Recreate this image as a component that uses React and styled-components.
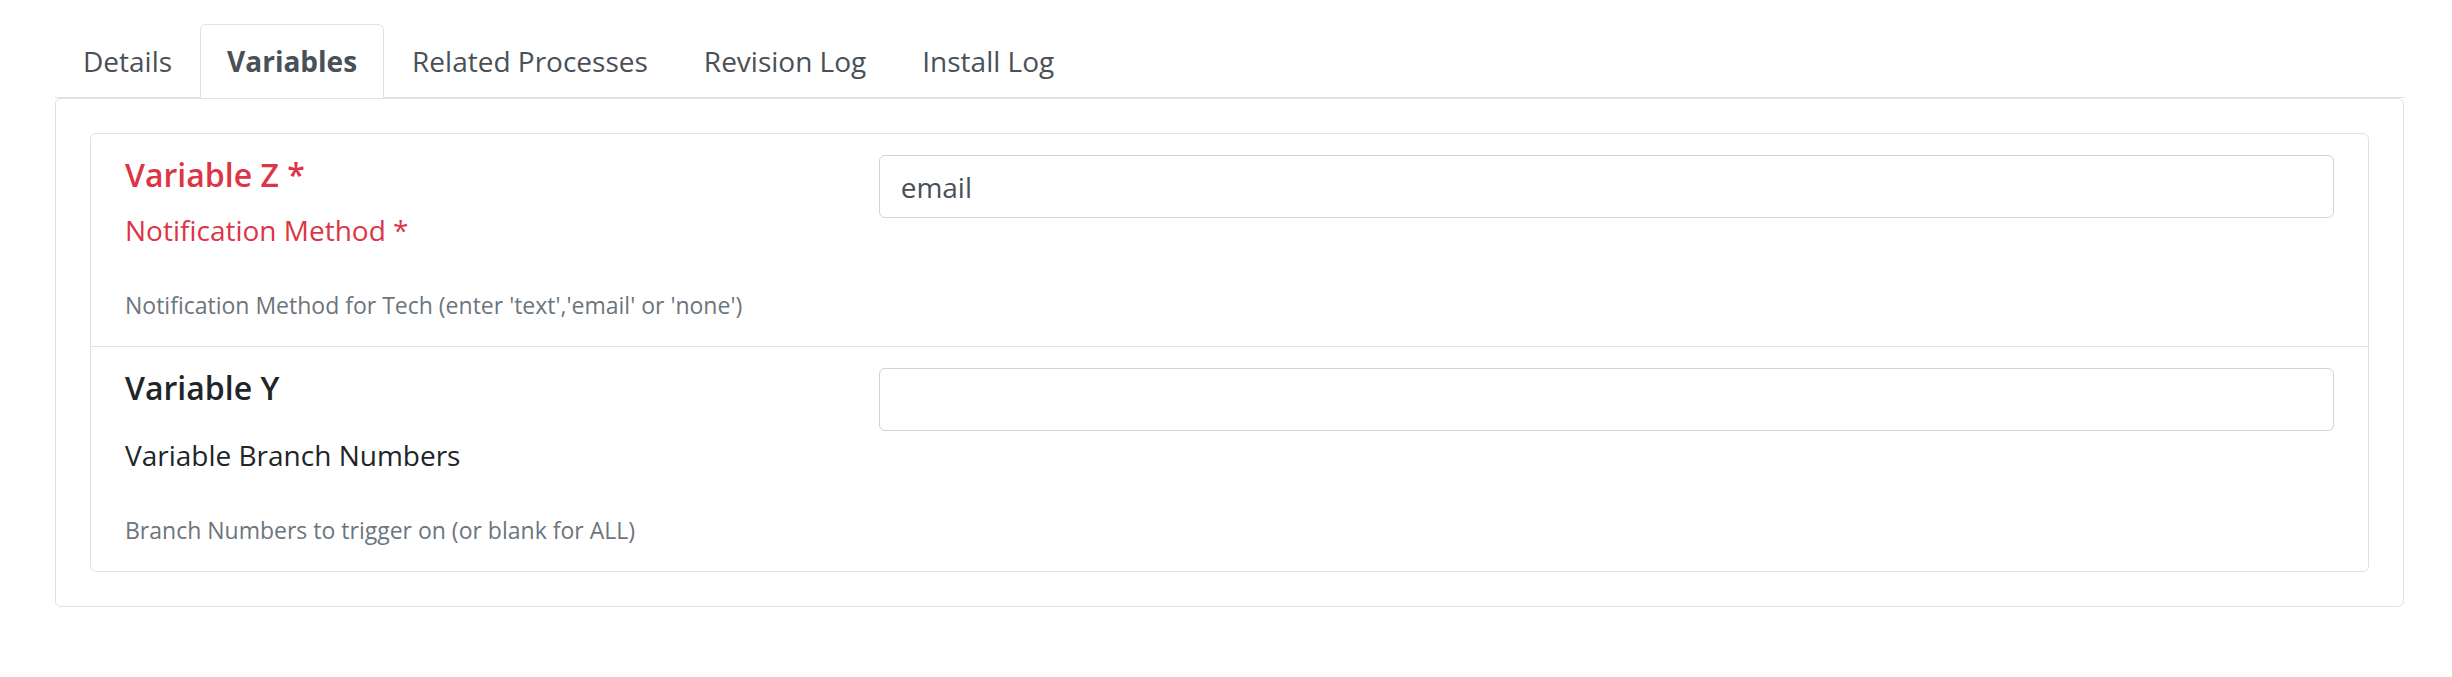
import React from "react";
import styled, { createGlobalStyle } from "styled-components";

const Global = createGlobalStyle`
  html, body { margin: 0; padding: 0; background: #ffffff; }
  body { font-family: "Open Sans", "Noto Sans", "Liberation Sans", sans-serif; color: #212529; }
  * { box-sizing: border-box; }
`;

const Page = styled.div`
  padding: 24px 48px 0 55px;
`;

const TabBar = styled.ul`
  display: flex;
  list-style: none;
  margin: 0;
  padding: 0;
  border-bottom: 1px solid #dee2e6;
`;

const Tab = styled.li`
  margin-bottom: -1px;
  padding: 14px ${(p) => (p.$active ? 26 : 27)}px;
  font-size: 28px;
  line-height: 44px;
  color: #495057;
  font-weight: ${(p) => (p.$active ? 700 : 400)};
  border: 1px solid transparent;
  border-color: ${(p) => (p.$active ? "#dee2e6 #dee2e6 #ffffff" : "transparent")};
  border-top-left-radius: 6px;
  border-top-right-radius: 6px;
  background: ${(p) => (p.$active ? "#ffffff" : "transparent")};
  cursor: pointer;
`;

const Panel = styled.div`
  border: 1px solid #dee2e6;
  border-radius: 6px;
  padding: 34px;
`;

const List = styled.div`
  border: 1px solid #dee2e6;
  border-radius: 6px;
`;

const Item = styled.div`
  display: grid;
  grid-template-columns: 1fr 2fr;
  column-gap: 26px;
  align-items: start;
  padding: 21px 34px 22px;
  & + & { border-top: 1px solid #dee2e6; }
`;

const LabelCol = styled.div`
  display: flex;
  flex-direction: column;
`;

const Title = styled.div`
  font-size: 32px;
  line-height: 40px;
  font-weight: 600;
  color: ${(p) => (p.$required ? "#dc3545" : "#212529")};
`;

const SubLabel = styled.div`
  margin-top: ${(p) => p.$gap}px;
  font-size: 28px;
  line-height: 44px;
  color: ${(p) => (p.$required ? "#dc3545" : "#212529")};
`;

const Help = styled.div`
  margin-top: 34px;
  font-size: 23px;
  line-height: 38px;
  color: #6c757d;
`;

const Input = styled.input`
  display: block;
  width: 100%;
  height: 63px;
  padding: 0 21px;
  font-family: inherit;
  font-size: 28px;
  color: #495057;
  background: #ffffff;
  border: 1px solid #ced4da;
  border-radius: 6px;
  outline: none;
`;

const tabs = ["Details", "Variables", "Related Processes", "Revision Log", "Install Log"];

const variables = [
  {
    title: "Variable Z *",
    label: "Notification Method *",
    help: "Notification Method for Tech (enter 'text','email' or 'none')",
    value: "email",
    required: true,
    gap: 13,
  },
  {
    title: "Variable Y",
    label: "Variable Branch Numbers",
    help: "Branch Numbers to trigger on (or blank for ALL)",
    value: "",
    required: false,
    gap: 25,
  },
];

export default function App() {
  return (
    <Page>
      <Global />
      <TabBar>
        {tabs.map((t) => (
          <Tab key={t} $active={t === "Variables"}>{t}</Tab>
        ))}
      </TabBar>
      <Panel>
        <List>
          {variables.map((v) => (
            <Item key={v.title}>
              <LabelCol>
                <Title $required={v.required}>{v.title}</Title>
                <SubLabel $required={v.required} $gap={v.gap}>{v.label}</SubLabel>
                <Help>{v.help}</Help>
              </LabelCol>
              <Input defaultValue={v.value} />
            </Item>
          ))}
        </List>
      </Panel>
    </Page>
  );
}
